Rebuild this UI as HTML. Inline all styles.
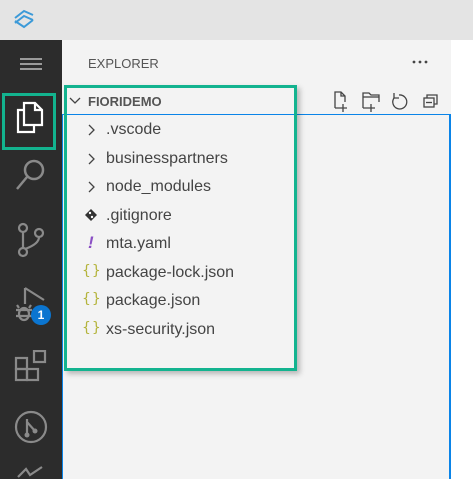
<!DOCTYPE html>
<html><head><style>
*{margin:0;padding:0;box-sizing:border-box}
html,body{width:473px;height:479px;overflow:hidden}
body{background:#fff;font-family:"Liberation Sans",sans-serif;position:relative}
.top{position:absolute;left:0;top:0;width:473px;height:40px;background:#e4e4e4}
.act{position:absolute;left:0;top:40px;width:62px;height:439px;background:#2c2c2c;overflow:hidden}
.side{position:absolute;left:62px;top:40px;width:389px;height:439px;background:#f3f3f3}
.blue{position:absolute;left:62px;top:114px;width:389px;height:365px;border:1px solid #0a84e8;border-right:2px solid #0a84e8;border-bottom:none}
.green1{position:absolute;left:2px;top:93px;width:54px;height:57px;border:3px solid #13b38f}
.green2{position:absolute;left:64px;top:85px;width:233px;height:286px;border:3px solid #13b38f;box-shadow:3px 3px 5px rgba(0,0,0,.25)}
.t{position:absolute;font-size:16px;color:#555}
.row{position:absolute;left:106px;font-size:16px;color:#444}
.chev{position:absolute;left:88px}
.br{position:absolute;left:82px;font-size:14px;color:#b4b43c;letter-spacing:1px;font-family:"DejaVu Sans",sans-serif}
</style></head><body>
<div class="top">
<svg style="position:absolute;left:12px;top:7px" width="24" height="24" viewBox="0 0 24 24"><g stroke="#3c9ad8" stroke-width="2" fill="none"><path d="M3 11 L12 4 L21 8"/><path d="M3 16 L12 9 L21 13"/><path d="M3 14 L12 20 L21 13"/></g></svg>
</div>
<div class="act">
<svg style="position:absolute;left:20px;top:17px" width="22" height="14"><g stroke="#9a9a9a" stroke-width="2"><line x1="0" y1="2" x2="22" y2="2"/><line x1="0" y1="7" x2="22" y2="7"/><line x1="0" y1="12" x2="22" y2="12"/></g></svg>
<svg style="position:absolute;left:14px;top:61px" width="32" height="34" viewBox="0 0 32 34"><g stroke="#fff" stroke-width="2.2" fill="none"><path d="M10 2 H21 L28 9 V24 H10 Z"/><path d="M21 2 V9 H28"/><path d="M10 9 H4 V31 H20 V24"/></g></svg>
<svg style="position:absolute;left:14px;top:118px" width="32" height="34"><g stroke="#8a8a8a" stroke-width="2.5" fill="none"><circle cx="20" cy="12" r="9"/><line x1="13" y1="19" x2="3" y2="31"/></g></svg>
<svg style="position:absolute;left:16px;top:182px" width="30" height="36"><g stroke="#8a8a8a" stroke-width="2.2" fill="none"><circle cx="7" cy="6" r="4"/><circle cx="23" cy="11" r="4"/><circle cx="7" cy="30" r="4"/><line x1="7" y1="10" x2="7" y2="26"/><path d="M23 15 Q23 22 9 27"/></g></svg>
<svg style="position:absolute;left:14px;top:246px" width="34" height="36"><g stroke="#8a8a8a" stroke-width="2.2" fill="none"><path d="M11 2 V18 M11 2 L30 14"/><ellipse cx="10" cy="28" rx="5" ry="6"/><path d="M2 24 H18 M2 30 H18 M5 22 L3 19 M15 22 L17 19"/></g></svg>
<div style="position:absolute;left:31px;top:265px;width:20px;height:20px;border-radius:50%;background:#0b75d0;color:#fff;font-size:12px;font-weight:bold;text-align:center;line-height:20px">1</div>
<svg style="position:absolute;left:14px;top:310px" width="34" height="34"><g stroke="#8a8a8a" stroke-width="2.2" fill="none"><rect x="2" y="8" width="11" height="11"/><rect x="2" y="19" width="11" height="11"/><rect x="13" y="19" width="11" height="11"/><rect x="20" y="1" width="11" height="11"/></g></svg>
<svg style="position:absolute;left:14px;top:370px" width="34" height="34"><g stroke="#8a8a8a" stroke-width="2.2" fill="none"><circle cx="17" cy="17" r="15"/><path d="M13 9 V25 M13 12 L21 21"/></g><circle cx="13" cy="25" r="2.5" fill="#8a8a8a"/><circle cx="21" cy="21" r="2.5" fill="#8a8a8a"/></svg>
<svg style="position:absolute;left:16px;top:425px" width="30" height="14"><g stroke="#8a8a8a" stroke-width="2.2" fill="none"><path d="M2 12 L10 4 L14 10 L26 2"/></g></svg>
</div>
<div class="side"></div>
<div class="blue"></div>
<div class="t" style="left:88px;top:56px;font-size:13px;color:#555">EXPLORER</div>
<svg style="position:absolute;left:412px;top:60px" width="20" height="4"><g fill="#444"><circle cx="2" cy="2" r="1.4"/><circle cx="8" cy="2" r="1.4"/><circle cx="14" cy="2" r="1.4"/></g></svg>
<svg style="position:absolute;left:332px;top:90px" width="120" height="22"><g stroke="#444" stroke-width="1.3" fill="none">
<path d="M3 18 V2 H9 L13 6 V12"/><path d="M9 2 V6 H13"/><path d="M3 18 H7 M11 14 V22 M7 18 H15"/>
<path d="M31 18 V3 H37 L39 5 H47 V12"/><path d="M31 7 H47"/><path d="M31 18 H35 M39 14 V22 M35 18 H43"/>
<path d="M67 5 A7 7 0 1 1 62 8"/><path d="M62 3 V8 H67"/>
<rect x="92" y="8" width="10" height="9"/><path d="M95 8 V5 H105 V14 H102"/><path d="M94 12.5 H100"/></g></svg>
<div class="green1"></div>
<svg style="position:absolute;left:69px;top:97px" width="12" height="8"><path d="M1 1 L6 6 L11 1" stroke="#444" stroke-width="1.3" fill="none"/></svg>
<div class="t" style="left:88px;top:94px;font-size:13px;font-weight:bold;color:#555">FIORIDEMO</div>
<svg class="chev" style="top:124px" width="8" height="12"><path d="M1 1 L6 6 L1 11" stroke="#444" stroke-width="1.3" fill="none"/></svg><div class="row" style="top:121px">.vscode</div>
<svg class="chev" style="top:153px" width="8" height="12"><path d="M1 1 L6 6 L1 11" stroke="#444" stroke-width="1.3" fill="none"/></svg><div class="row" style="top:150px">businesspartners</div>
<svg class="chev" style="top:181px" width="8" height="12"><path d="M1 1 L6 6 L1 11" stroke="#444" stroke-width="1.3" fill="none"/></svg><div class="row" style="top:178px">node_modules</div>
<svg style="position:absolute;left:84px;top:208px" width="14" height="14"><path d="M7 1 L13 7 L7 13 L1 7 Z" fill="#333"/><circle cx="6" cy="5" r="1.2" fill="#fff"/><circle cx="8" cy="9" r="1.2" fill="#fff"/></svg>
<div class="row" style="top:207px">.gitignore</div>
<div class="t" style="left:88px;top:233px;font-size:17px;font-style:italic;font-weight:bold;color:#8a4fc4">!</div>
<div class="row" style="top:235px">mta.yaml</div>
<div class="br" style="top:263px">{}</div><div class="row" style="top:264px">package-lock.json</div>
<div class="br" style="top:291px">{}</div><div class="row" style="top:292px">package.json</div>
<div class="br" style="top:320px">{}</div><div class="row" style="top:321px">xs-security.json</div>
<div class="green2"></div>
</body></html>
